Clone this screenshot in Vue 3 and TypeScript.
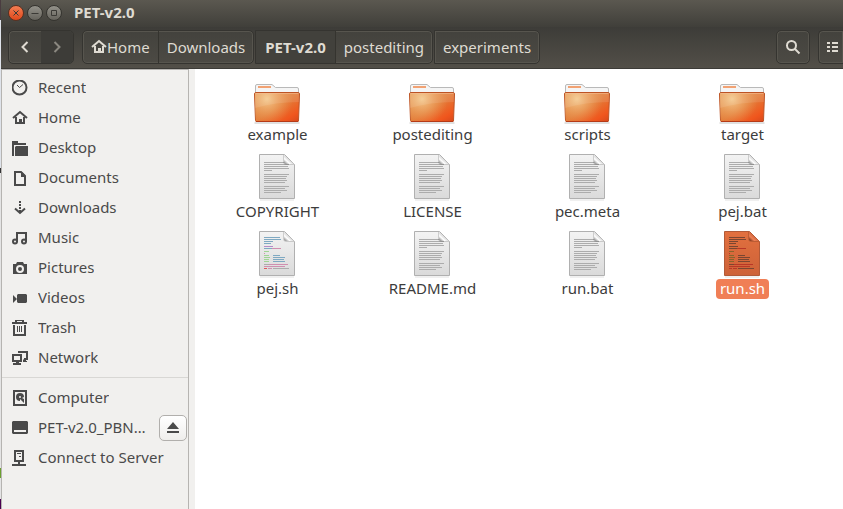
<script setup lang="ts">
import { ref } from 'vue'

interface Shape { d: string; w?: number }
interface Place { name: string; icon: Shape[]; ejectable?: boolean }
interface Entry { name: string; kind: 'folder' | 'text' | 'script' }
interface Stroke { x: number; y: number; w: number; c: string }

const home: Shape[] = [
  { d: 'M1 8 8 2l7 6', w: 2 },
  { d: 'M3 7h2v5h2V9h3v3h1V7h2v7H3z' },
]

const places: Place[] = [
  { name: 'Recent', icon: [{ d: 'M14.5 7.5a7 7 0 1 1-14 0a7 7 0 0 1 14 0z', w: 2 }, { d: 'M5 5l2.5 2.5L11 4.5', w: 1 }] },
  { name: 'Home', icon: home },
  { name: 'Desktop', icon: [{ d: 'M0 1h6v2h8v2H2v11H0z' }, { d: 'M4 6h12v10H3V7z' }] },
  { name: 'Documents', icon: [{ d: 'M3 2h6l4 4v9H3z', w: 2 }, { d: 'M9 2h1l3 3v2H9z' }] },
  { name: 'Downloads', icon: [{ d: 'M7 1h2v2H7zM7 4h2v2H7zM7 7h2v2H7zM7 10h2v3H7z' }, { d: 'M3 8.500l5 4.500 5-4.500', w: 2 }] },
  { name: 'Music', icon: [{ d: 'M5 12V3h9v9', w: 2 }, { d: 'M5 11.500a2 2 0 1 1-4 0a2 2 0 0 1 4 0zM14 11.500a2 2 0 1 1-4 0a2 2 0 0 1 4 0z', w: 2 }] },
  { name: 'Pictures', icon: [{ d: 'M1 4h3l1-2h6l1 2h3v10H1zM8 5a4 4 0 1 0 0 8a4 4 0 0 0 0-8zM8 7a2 2 0 1 1 0 4a2 2 0 0 1 0-4z' }] },
  { name: 'Videos', icon: [{ d: 'M1 5l4 4-4 4z' }, { d: 'M6 4h8l1 1v7l-1 1H6l-1-1V5z' }] },
  { name: 'Trash', icon: [{ d: 'M0 2h3V0h9v2h3v2H0zM5 1v1h5V1z' }, { d: 'M2 5v10h11V5', w: 2 }, { d: 'M5.500 6v6M7.500 6v6M9.500 6v6', w: 1 }] },
  { name: 'Network', icon: [{ d: 'M7 3V2h8v7h-3', w: 2 }, { d: 'M1 5h8v6H1z', w: 2 }, { d: 'M4 12h3v1h2v2H1v-2h3zM12 9h2v2h1v1h-4v-2z' }] },
]

const devices: Place[] = [
  { name: 'Computer', icon: [{ d: 'M2 1h12v14H2z', w: 2 }, { d: 'M8 3a4 4 0 1 0 0 8v-2l4 4V9l-2-1 2-1a4 4 0 0 0-4-4zM8 6a1 1 0 1 1 0 2a1 1 0 0 1 0-2z' }] },
  { name: 'PET-v2.0_PBN…', ejectable: true, icon: [{ d: 'M1 1h14l1 1v11l-1 1H1l-1-1V2zM2 10v2h12v-2z' }] },
  { name: 'Connect to Server', icon: [{ d: 'M3 1h8v10H3z', w: 2 }, { d: 'M5 3h4v1H5zM7 6h2v1H7zM6 12h2v2h6v2H0v-2h6z' }] },
]

const entries: Entry[] = [
  { name: 'example', kind: 'folder' },
  { name: 'postediting', kind: 'folder' },
  { name: 'scripts', kind: 'folder' },
  { name: 'target', kind: 'folder' },
  { name: 'COPYRIGHT', kind: 'text' },
  { name: 'LICENSE', kind: 'text' },
  { name: 'pec.meta', kind: 'text' },
  { name: 'pej.bat', kind: 'text' },
  { name: 'pej.sh', kind: 'script' },
  { name: 'README.md', kind: 'text' },
  { name: 'run.bat', kind: 'text' },
  { name: 'run.sh', kind: 'script' },
]

const grey = '#acacac'
const textLines: Stroke[] = [
  [8, 25], [10, 25], [12, 24], [14, 25], [16, 8],
  [20, 25], [22, 23], [24, 22], [26, 23], [28, 21],
  [32, 25], [34, 21], [36, 23], [38, 17],
].map(([y, w]) => ({ x: 5, y, w, c: grey }))

const blue = '#7fa9c2'
const pink = '#d08fb0'
const green = '#9fd494'
const red = '#e05858'
const scriptLines: Stroke[] = [
  { x: 5, y: 6, w: 16, c: blue }, { x: 5, y: 8, w: 17, c: blue },
  { x: 5, y: 10, w: 9, c: blue }, { x: 5, y: 12, w: 7, c: blue },
  { x: 5, y: 15, w: 9, c: '#b58bc8' }, { x: 5, y: 17, w: 8, c: blue }, { x: 13, y: 17, w: 9, c: pink },
  { x: 5, y: 20, w: 5, c: green }, { x: 5, y: 22, w: 1, c: pink },
  { x: 5, y: 24, w: 5, c: green }, { x: 14, y: 24, w: 7, c: blue },
  { x: 5, y: 26, w: 6, c: green }, { x: 14, y: 26, w: 12, c: blue },
  { x: 5, y: 28, w: 5, c: green }, { x: 14, y: 28, w: 11, c: blue },
  { x: 5, y: 30, w: 5, c: green }, { x: 14, y: 30, w: 12, c: blue },
  { x: 5, y: 33, w: 5, c: grey }, { x: 10, y: 33, w: 19, c: pink },
  { x: 5, y: 35, w: 21, c: pink },
  { x: 5, y: 37, w: 3, c: red }, { x: 9, y: 37, w: 4, c: pink }, { x: 14, y: 37, w: 16, c: grey },
]

const selected = ref('run.sh')
const linesFor = (e: Entry) => (e.kind === 'script' ? scriptLines : textLines)

function tint(color: string, active: boolean): string {
  if (!active) return color
  if (color === pink || color === red) return '#b93727'
  return color === green ? '#87652c' : '#7a4631'
}
</script>

<template>
  <div class="desktop">
    <div class="backdrop"></div>
    <div class="window">
      <header class="chrome">
        <div class="titlebar">
          <button class="dot close" aria-label="Close">
            <svg width="14" height="14" viewBox="0 0 14 14"><path d="M4.500 4.500l5 5M9.500 4.500l-5 5" /></svg>
          </button>
          <button class="dot" aria-label="Minimize">
            <svg width="14" height="14" viewBox="0 0 14 14"><path d="M3.500 7.500h7" /></svg>
          </button>
          <button class="dot" aria-label="Maximize">
            <svg width="14" height="14" viewBox="0 0 14 14"><path d="M4.500 4.500h5v5h-5z" /></svg>
          </button>
          <h1>PET-v2.0</h1>
        </div>
        <div class="toolbar">
          <div class="group nav">
            <button class="tool" aria-label="Back">
              <svg width="12" height="14" viewBox="0 0 12 14"><path d="M8.500 2 3.500 7l5 5" class="arrow" /></svg>
            </button>
            <button class="tool dim" aria-label="Forward" disabled>
              <svg width="12" height="14" viewBox="0 0 12 14"><path d="M3.500 2l5 5-5 5" class="arrow" /></svg>
            </button>
          </div>
          <nav class="crumbs" aria-label="Path">
            <div class="group">
              <button class="crumb">
                <svg width="16" height="16" viewBox="0 0 16 16" class="glyph light">
                  <path v-for="(s, i) in home" :key="i" :d="s.d" :class="s.w ? 'line w' + s.w : 'solid'" />
                </svg>Home
              </button>
              <button class="crumb">Downloads</button>
            </div>
            <div class="group path">
              <button class="crumb current">PET-v2.0</button>
              <button class="crumb">postediting</button>
            </div>
            <div class="group path">
              <button class="crumb">experiments</button>
            </div>
          </nav>
          <button class="tool single" aria-label="Search">
            <svg width="16" height="16" viewBox="0 0 16 16">
              <circle cx="6.500" cy="6.500" r="4.500" class="arrow" /><path d="M9.500 9.500l5 5" class="arrow" />
            </svg>
          </button>
          <button class="tool single clipped" aria-label="List view">
            <svg width="12" height="12" viewBox="0 0 12 12">
              <path d="M0 1h3v2H0zM5 1h6v2H5zM0 5h3v2H0zM5 5h6v2H5zM0 9h3v2H0zM5 9h6v2H5z" class="cream" />
            </svg>
          </button>
        </div>
      </header>

      <div class="body">
        <aside class="sidebar">
          <ul v-for="(list, n) in [places, devices]" :key="n">
            <li v-for="p in list" :key="p.name">
              <a href="#" @click.prevent>
                <svg width="16" height="16" viewBox="0 0 16 16" class="glyph">
                  <path v-for="(s, i) in p.icon" :key="i" :d="s.d" :class="s.w ? 'line w' + s.w : 'solid'" />
                </svg>
                <span>{{ p.name }}</span>
              </a>
              <button v-if="p.ejectable" class="eject" aria-label="Eject">
                <svg width="12" height="12" viewBox="0 0 12 12"><path d="M6 0l6 7H0zM0 9h12v2H0z" /></svg>
              </button>
            </li>
          </ul>
        </aside>

        <main class="files">
          <button
            v-for="e in entries"
            :key="e.name"
            class="entry"
            :class="{ selected: selected === e.name }"
            @click="selected = e.name"
          >
            <svg v-if="e.kind === 'folder'" class="art" width="48" height="48" viewBox="1 0 48 48">
              <defs>
                <linearGradient id="front" x1="0" y1="0" x2="1" y2="1">
                  <stop offset="0" stop-color="#e2914b" /><stop offset="0.500" stop-color="#e27c39" />
                  <stop offset="0.820" stop-color="#f0561d" /><stop offset="1" stop-color="#d5481c" />
                </linearGradient>
                <radialGradient id="shine" gradientUnits="userSpaceOnUse" cx="14" cy="23" r="26">
                  <stop offset="0" stop-color="#f8d9a0" stop-opacity="0.800" />
                  <stop offset="1" stop-color="#f0a860" stop-opacity="0" />
                </radialGradient>
              </defs>
              <path d="M1.500 47h45" stroke="#000" stroke-opacity="0.120" stroke-width="2" />
              <path d="M2.500 19V10q0-1.500 1.500-1.500h15l3.500 3H44q1.500 0 1.500 1.500v6z" fill="#f5f5f5" stroke="#b9b9b9" />
              <path d="M5 11h13" stroke="#f2a273" stroke-width="2" />
              <path d="M1.500 18q0-1.500 1.500-1.500h42q1.500 0 1.500 1.500l-1 27q0 .5-1 .5h-41q-1 0-1-1z" fill="url(#front)" stroke="#bd5425" />
              <path d="M2 17h44v28H2z" fill="url(#shine)" />
              <path d="M2 17h44v9Q22 26 2 32z" fill="#fff" fill-opacity="0.100" />
              <path d="M2.500 17.500h43" stroke="#f5bd91" stroke-opacity="0.600" />
              <path d="M3 45.500h42" stroke="#b53a17" />
            </svg>
            <svg v-else class="art" width="48" height="48" viewBox="1 0 48 48">
              <defs>
                <linearGradient id="paper" x1="0" y1="0" x2="0" y2="1">
                  <stop offset="0" stop-color="#f3f3f3" /><stop offset="1" stop-color="#dadada" />
                </linearGradient>
                <linearGradient id="paperSelected" x1="0" y1="0" x2="0" y2="1">
                  <stop offset="0" stop-color="#e2703f" /><stop offset="1" stop-color="#cd6238" />
                </linearGradient>
                <linearGradient id="fold" x1="0" y1="1" x2="1" y2="0">
                  <stop offset="0.100" stop-color="#9c9c9c" /><stop offset="0.300" stop-color="#fff" />
                  <stop offset="0.500" stop-color="#d8d8d8" />
                </linearGradient>
                <linearGradient id="foldSelected" x1="0" y1="1" x2="1" y2="0">
                  <stop offset="0.100" stop-color="#8c3f22" /><stop offset="0.300" stop-color="#ee8055" />
                  <stop offset="0.500" stop-color="#d46a40" />
                </linearGradient>
              </defs>
              <path d="M7 47h34" stroke="#000" stroke-opacity="0.120" />
              <path class="sheet" d="M6.500 1.500h25l10 10v34h-35z" />
              <g transform="translate(6 1)">
                <rect
                  v-for="(l, i) in linesFor(e)" :key="i" :x="l.x" :y="l.y" :width="l.w" height="1"
                  :fill="tint(l.c, selected === e.name)"
                />
              </g>
              <path class="corner" d="M31 2v7q0 2 2 2h8z" />
              <path class="crease" d="M30.500 2v7q0 2.500 2.500 2.500h8" />
            </svg>
            <span class="label">{{ e.name }}</span>
          </button>
        </main>
      </div>
    </div>
  </div>
</template>

<style>
html, body, #app { height: 100%; }
body { margin: 0; overflow: hidden; }
</style>

<style scoped>
* { box-sizing: border-box; }

.desktop {
  display: flex;
  height: 100%;
  background: #fff;
  font-family: "Noto Sans", "Open Sans", sans-serif;
  font-size: 15px;
  line-height: 18px;
  color: #3c3b37;
}

button {
  margin: 0;
  padding: 0;
  border: 0;
  background: none;
  color: inherit;
  font: inherit;
}

.backdrop {
  flex: 0 0 1px;
  background: linear-gradient(#4a3c40 0 4%, #dfe3ea 4% 33%, #333 33% 34%, #e4e4e4 34% 92%, #6ca030 92% 94%, #e4e4e4 94% 98%, #4a0050 98%);
}

.window { flex: 1; min-width: 0; display: flex; flex-direction: column; }

.chrome {
  background: #4b4943;
  color: #dfdbd2;
  border-bottom: 1px solid #3c3b37;
}

.titlebar {
  display: flex;
  align-items: center;
  gap: 3px;
  height: 27px;
  padding: 0 7px 2px;
  background: linear-gradient(#5b5850, #403f3a);
}
.titlebar h1 { margin: 0 0 0 9px; padding-bottom: 2px; font-size: 15px; font-weight: 700; }

.dot {
  display: grid;
  width: 16px;
  height: 16px;
  border: 1px solid #35342f;
  border-radius: 50%;
  background: linear-gradient(#94928a, #65635c);
}
.dot path { fill: none; stroke: #3b3a36; }
.close { background: linear-gradient(#f47e53, #e0481b); border-color: #5b3020; }

.toolbar {
  display: flex;
  align-items: center;
  height: 41px;
  padding: 0 0 1px 7px;
  gap: 8px;
  background: linear-gradient(#3d3c38, #524f48);
}

.group, .single {
  display: flex;
  height: 34px;
  border: 1px solid #353430;
  border-radius: 5px;
  background: linear-gradient(#43423d, #4c4a44);
  box-shadow: inset 0 0 0 1px #57554e;
  overflow: hidden;
}
.tool { display: flex; align-items: center; justify-content: center; width: 32px; }
.arrow { fill: none; stroke: #dfdbd2; stroke-width: 2; }
.cream { fill: #dfdbd2; }
.dim { background: #3d3c38; }
.dim .arrow { stroke: #8b8880; }
.single { width: 34px; }
.clipped { width: 25px; padding-left: 3px; border-right: 0; border-radius: 5px 0 0 5px; }

.crumbs { display: flex; flex: 1; min-width: 0; gap: 1px; }
.crumb {
  display: flex;
  align-items: center;
  padding: 0 8px;
  color: #dfdbd2;
  white-space: nowrap;
}
.crumb + .crumb { border-left: 1px solid #35342f; }
.path { border-radius: 0 5px 5px 0; }
.current { padding: 0 9px; background: #42413c; font-weight: 700; }

.glyph { flex: none; }
.solid { fill: #4a4a4a; fill-rule: evenodd; }
.line { fill: none; stroke: #4a4a4a; }
.w1 { stroke-width: 1px; }
.w2 { stroke-width: 2px; }
.light .solid { fill: #dfdbd2; }
.light .line { stroke: #dfdbd2; }

.body { flex: 1; min-height: 0; display: flex; background: #f1f0ee; }

.sidebar {
  flex: none;
  width: 188px;
  border: solid #b6b4b1;
  border-width: 1px 1px 0;
}
.sidebar ul { margin: 0; padding: 3px 0 4px; list-style: none; }
.sidebar ul + ul { border-top: 1px solid #d8d7d4; padding-top: 5px; }
.sidebar li { display: flex; align-items: center; height: 30px; padding-right: 1px; }
.sidebar a {
  flex: 1;
  min-width: 0;
  display: flex;
  align-items: center;
  gap: 10px;
  padding-left: 10px;
  color: #4a4a4a;
  text-decoration: none;
}
.sidebar span {
  padding-bottom: 2px;
  overflow: hidden;
  text-overflow: ellipsis;
  white-space: nowrap;
}

.eject {
  display: grid;
  place-items: center;
  flex: none;
  width: 28px;
  height: 26px;
  border: 1px solid #b1afac;
  border-radius: 5px;
  background: linear-gradient(#fff, #efeeec);
}
.eject path { fill: #4a4a4a; }

.files {
  flex: 1;
  min-width: 0;
  display: grid;
  grid-template-columns: repeat(auto-fill, 155px);
  grid-auto-rows: 69px;
  align-content: start;
  row-gap: 8px;
  margin-left: 6px;
  padding: 7px 0 0 5px;
  background: #fff;
}
.entry { display: flex; flex-direction: column; align-items: center; gap: 1px; color: #3c3c3c; }
.art { display: block; flex: none; }
.label { padding: 0 4px 2px; border-radius: 4px; }
.sheet { fill: url(#paper); stroke: #b0b0b0; }
.corner { fill: url(#fold); }
.crease { fill: none; stroke: #000; stroke-opacity: 0.15; }
.selected .label { background: #f07f56; color: #fff; }
.selected .sheet { fill: url(#paperSelected); stroke: #b25a38; }
.selected .corner { fill: url(#foldSelected); }
</style>
